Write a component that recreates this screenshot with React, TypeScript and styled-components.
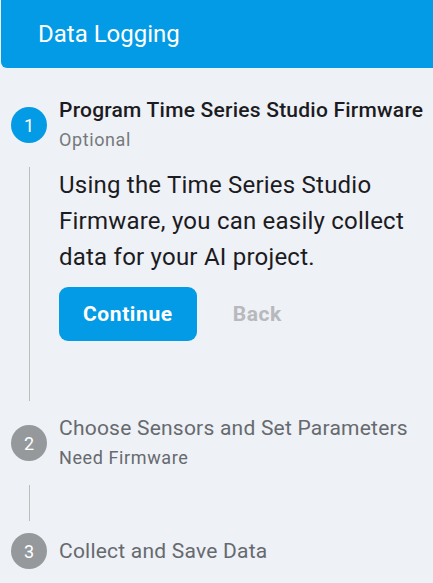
import React from "react";
import styled, { createGlobalStyle } from "styled-components";

const Global = createGlobalStyle`
  html, body { margin: 0; padding: 0; background: #eef1f6; }
  body { font-family: Roboto, "Liberation Sans", Arial, sans-serif; overflow: hidden; }
`;

const Page = styled.div`
  width: 433px;
  height: 583px;
  background: #eef1f6;
  display: flex;
  flex-direction: column;
`;

const Header = styled.header`
  height: 68px;
  margin-left: 1px;
  background: #039be5;
  border-bottom-left-radius: 6px;
  display: flex;
  align-items: center;
  padding-left: 37px;
  color: #fff;
  font-size: 24px;
  font-weight: 400;
`;

const Stepper = styled.div`
  display: flex;
  flex-direction: column;
  padding: 15px 0 0 11px;
`;

const StepRow = styled.div`
  display: flex;
  align-items: center;
  gap: 12px;
  padding: 12px 0;
`;

const Circle = styled.div<{ $active?: boolean }>`
  width: 36px;
  height: 36px;
  flex: 0 0 36px;
  border-radius: 50%;
  background: ${(p) => (p.$active ? "#039be5" : "#95999c")};
  color: #fff;
  font-size: 18px;
  display: flex;
  align-items: center;
  justify-content: center;
`;

const LabelBlock = styled.div`
  display: flex;
  flex-direction: column;
`;

const Title = styled.div<{ $active?: boolean }>`
  font-size: 21px;
  line-height: 30px;
  letter-spacing: 0.225px;
  font-weight: ${(p) => (p.$active ? 500 : 400)};
  color: ${(p) => (p.$active ? "#1c1b1f" : "#666a6e")};
  white-space: nowrap;
`;

const Caption = styled.div<{ $active?: boolean }>`
  font-size: 18px;
  line-height: 30px;
  letter-spacing: 0.6px;
  color: ${(p) => (p.$active ? "#76797c" : "#666a6e")};
`;

const Content = styled.div`
  margin-left: 18px;
  border-left: 1px solid #bdbdbd;
  padding: 0 12px 60px 29px;
`;

const Body = styled.p`
  margin: 0;
  font-size: 24px;
  line-height: 36px;
  letter-spacing: 0.225px;
  color: #1c1b1f;
`;

const Actions = styled.div`
  display: flex;
  align-items: center;
  gap: 12px;
  margin-top: 12px;
`;

const Button = styled.button<{ $primary?: boolean }>`
  height: 54px;
  padding: 0 24px;
  border: none;
  border-radius: 9px;
  font-family: inherit;
  font-size: 21px;
  font-weight: 700;
  letter-spacing: 0.6px;
  background: ${(p) => (p.$primary ? "#039be5" : "transparent")};
  color: ${(p) => (p.$primary ? "#fff" : "#b7b9bc")};
  cursor: pointer;
`;

const Connector = styled.div`
  margin-left: 18px;
  height: 36px;
  border-left: 1px solid #bdbdbd;
`;

export default function App() {
  return (
    <Page>
      <Global />
      <Header>Data Logging</Header>
      <Stepper>
        <StepRow>
          <Circle $active>1</Circle>
          <LabelBlock>
            <Title $active>Program Time Series Studio Firmware</Title>
            <Caption $active>Optional</Caption>
          </LabelBlock>
        </StepRow>
        <Content>
          <Body>
            Using the Time Series Studio Firmware, you can easily collect data
            for your AI project.
          </Body>
          <Actions>
            <Button $primary>Continue</Button>
            <Button disabled>Back</Button>
          </Actions>
        </Content>
        <StepRow>
          <Circle>2</Circle>
          <LabelBlock>
            <Title>Choose Sensors and Set Parameters</Title>
            <Caption>Need Firmware</Caption>
          </LabelBlock>
        </StepRow>
        <Connector />
        <StepRow>
          <Circle>3</Circle>
          <LabelBlock>
            <Title>Collect and Save Data</Title>
          </LabelBlock>
        </StepRow>
      </Stepper>
    </Page>
  );
}
